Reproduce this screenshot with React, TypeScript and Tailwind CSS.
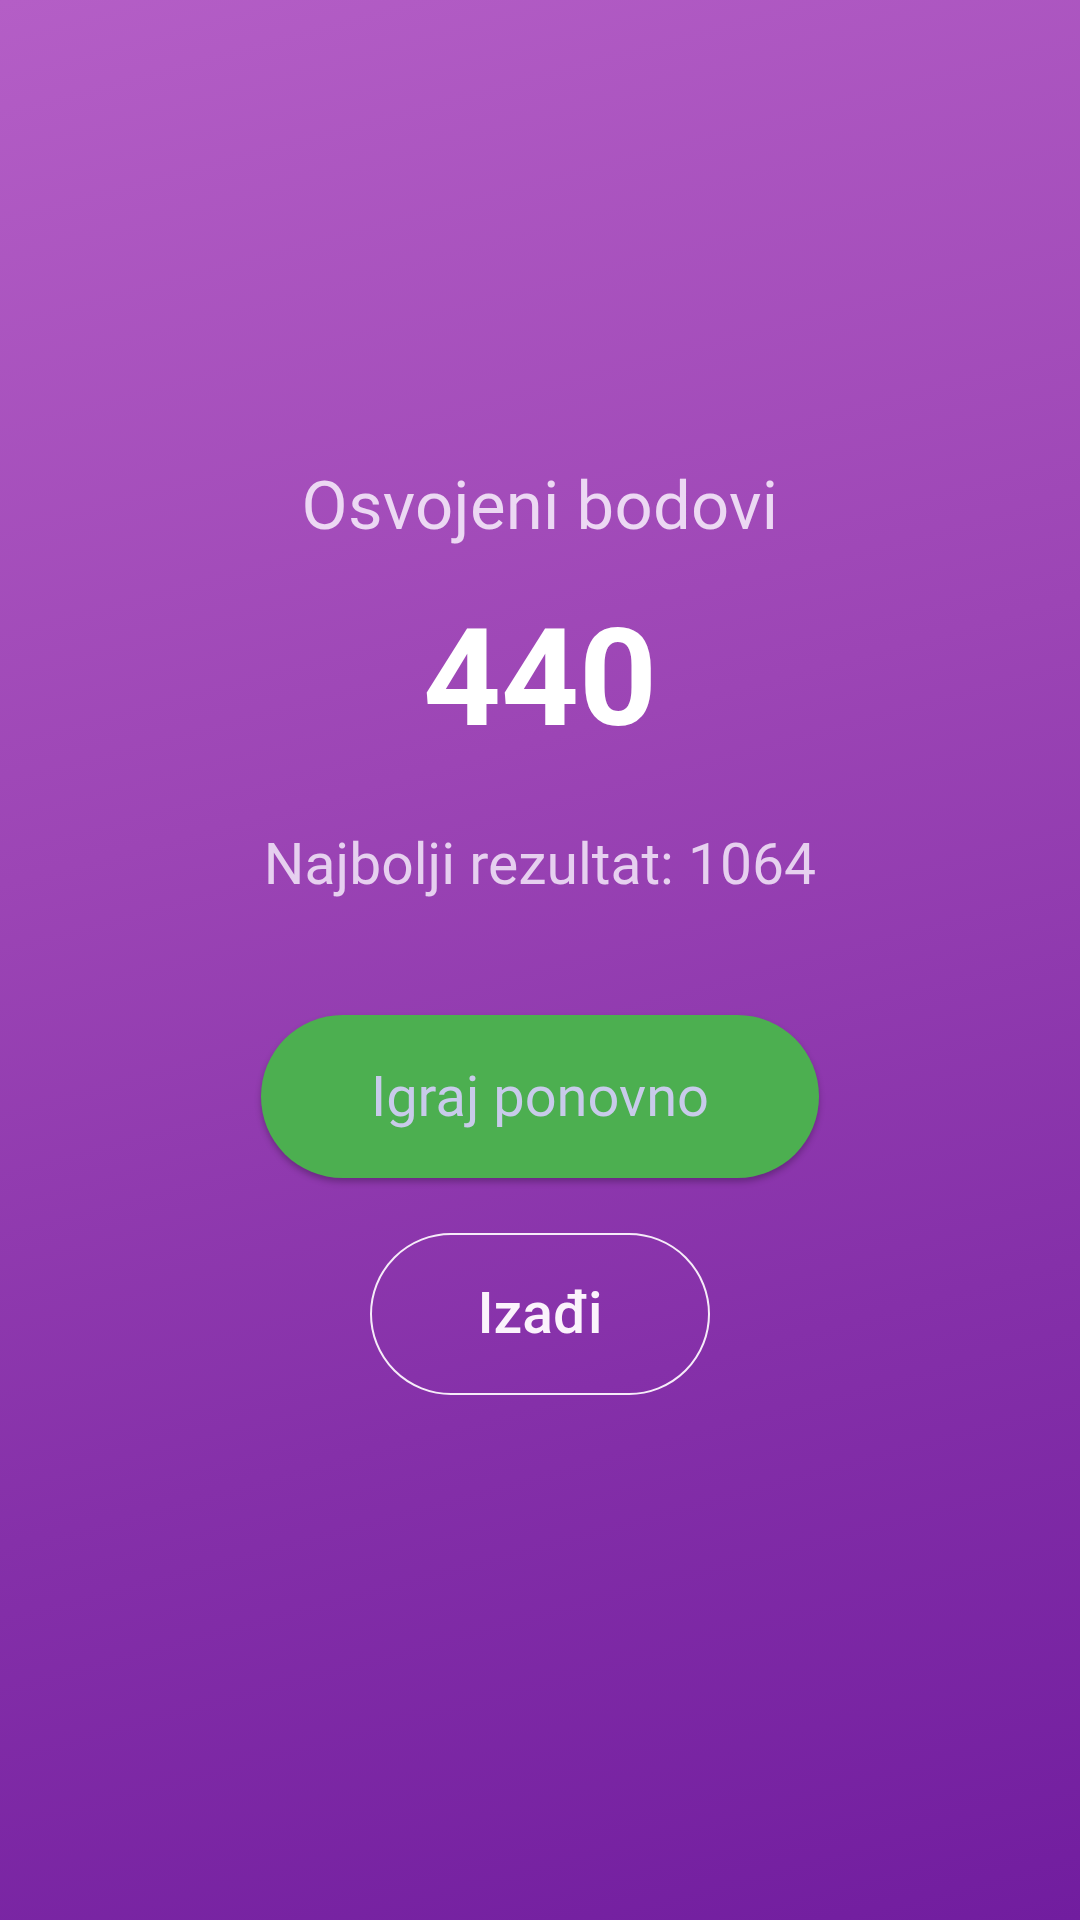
export default function App() {
  return (
    <div
      className="w-[1080px] h-[1920px] flex flex-col items-center bg-[linear-gradient(165deg,#b45ec6_0%,#9c45b5_40%,#8530a9_70%,#711d9f_100%)]"
      style={{ fontFamily: 'Roboto, "Noto Sans", sans-serif' }}
    >
      <div className="h-[473px] shrink-0" />

      <h2 className="text-[67px] leading-[67px] tracking-[0.3px] text-[#ecd8f3] font-normal">Osvojeni bodovi</h2>

      <div className="mt-[71px] text-[136px] leading-[136px] font-bold text-white">440</div>

      <p className="mt-[89px] text-[57px] leading-[57px] text-[#e6d0ef]">Najbolji rezultat: 1064</p>

      <button className="mt-[122px] w-[558px] h-[163px] rounded-full bg-[#4caf50] shadow-[0_4px_6px_rgba(0,0,0,0.25)] text-[56px] text-[#c8cbea] flex items-center justify-center">
        Igraj ponovno
      </button>

      <button className="mt-[55px] w-[340px] h-[162px] rounded-full border-2 border-[#f6ecf9] text-[57px] font-medium text-[#fbf3fc] flex items-center justify-center">
        Izađi
      </button>
    </div>
  );
}
